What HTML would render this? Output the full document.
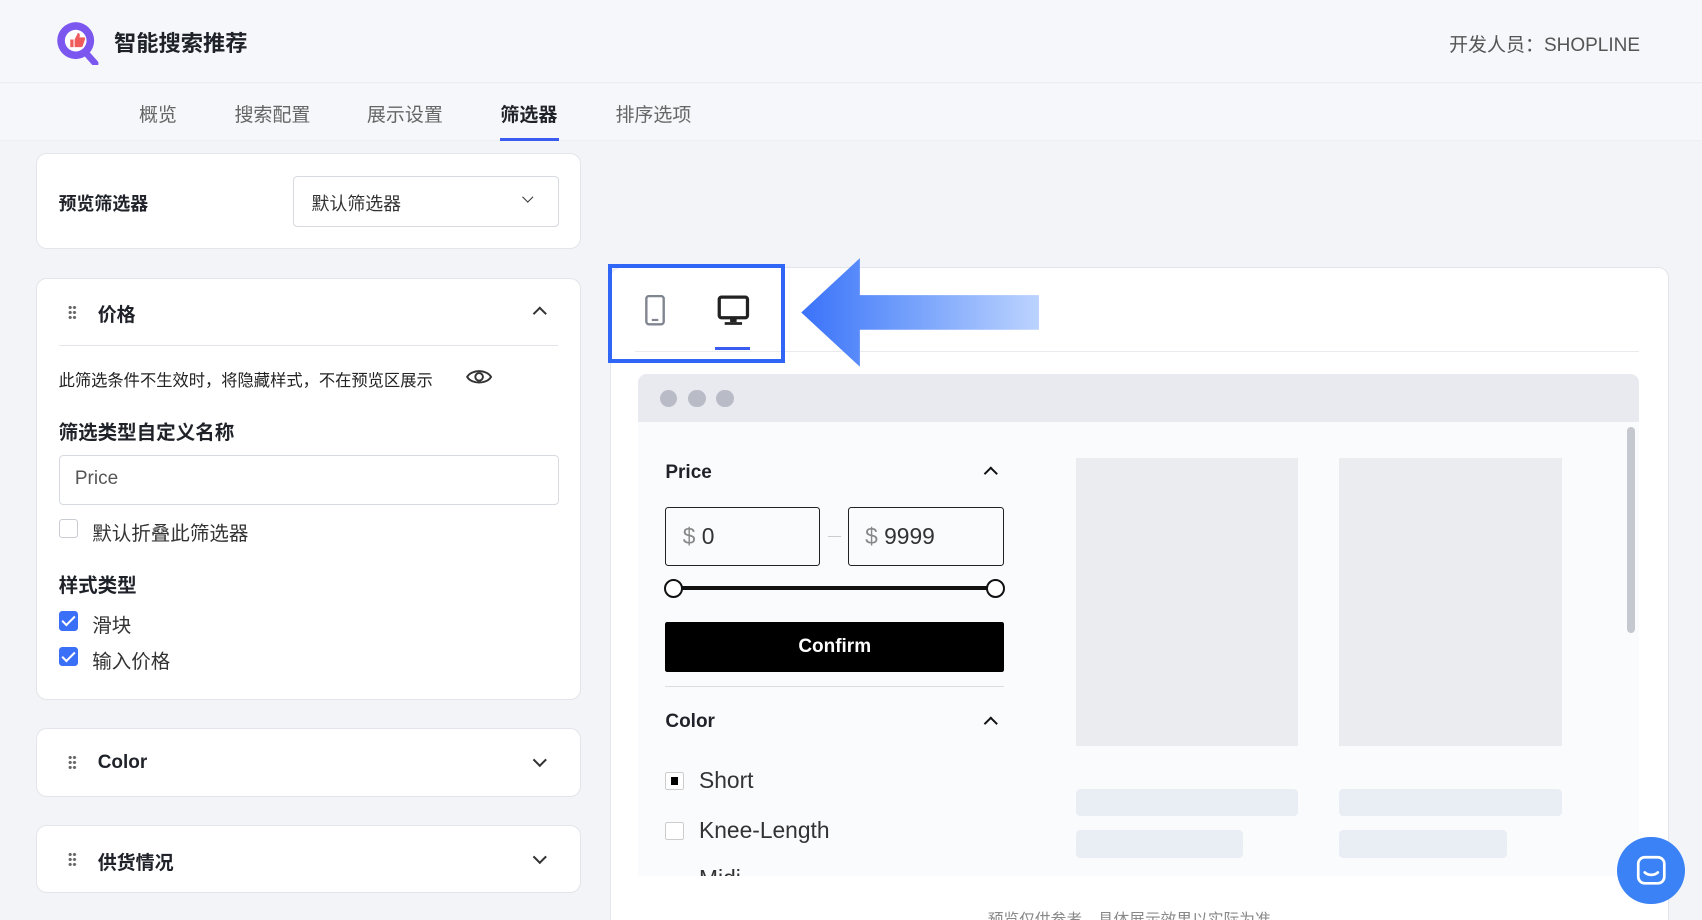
<!DOCTYPE html>
<html><head><meta charset="utf-8"><style>
html,body{margin:0;padding:0;width:1702px;height:920px;overflow:hidden;background:#f3f4f7}
#w{zoom:1.08546;width:1568px;height:848px;position:relative;font-family:"Liberation Sans","Noto Sans CJK SC",sans-serif;color:#1f2329;overflow:hidden}
.a{position:absolute}
.card{position:absolute;background:#fff;border:1px solid #e3e5ea;border-radius:10px}
.b{font-weight:bold}
.cb{position:absolute;width:18px;height:18px;border-radius:3px;background:#3a6ff7}
.cb:after{content:"";position:absolute;left:6px;top:2px;width:5px;height:10px;border:solid #fff;border-width:0 2px 2px 0;transform:rotate(45deg)}
.chev{position:absolute;width:9px;height:9px;border:solid #333;border-width:0 2px 2px 0}
.grip{position:absolute;width:8px;height:14px;background:radial-gradient(circle,#666 1.3px,transparent 1.6px) 0 0/4px 4.6px}
</style></head><body><div id="w">
<div class="a" style="left:0;top:0;width:1568px;height:76px;background:#f6f7fa;border-bottom:1px solid #eceef2"></div>
<svg class="a" style="left:50px;top:18px" width="44" height="42" viewBox="0 0 44 42"><circle cx="20" cy="19" r="17" fill="#7b57f0"/><path d="M30 31l8 9" stroke="#7b57f0" stroke-width="6" stroke-linecap="round"/><circle cx="20" cy="19" r="10" fill="#fff"/><path d="M15 18h3v7h-3zM19 18l3-6c2 0 2 2 1.5 4h4c1 0 1.5 1 1 2l-2 6c-.3.7-1 1-1.5 1H19z" fill="#f05b5b"/></svg>
<div class="a b" style="left:105px;top:24px;font-size:20.5px">智能搜索推荐</div>
<div class="a" style="left:1335px;top:28px;font-size:17.5px;color:#555">开发人员：SHOPLINE</div>
<div class="a" style="left:0;top:77px;width:1568px;height:52px;background:#f6f7fa;border-bottom:1px solid #eceef2"></div>
<div class="a" style="left:128px;top:92px;font-size:17.5px;color:#666">概览</div>
<div class="a" style="left:216px;top:92px;font-size:17.5px;color:#666">搜索配置</div>
<div class="a" style="left:338px;top:92px;font-size:17.5px;color:#666">展示设置</div>
<div class="a b" style="left:461px;top:92px;font-size:17.5px">筛选器</div>
<div class="a" style="left:461px;top:127px;width:54px;height:3px;background:#3a5cf0"></div>
<div class="a" style="left:567px;top:92px;font-size:17.5px;color:#666">排序选项</div>

<div class="card" style="left:33px;top:141px;width:500px;height:87px"></div>
<div class="a b" style="left:54px;top:175px;font-size:16.5px">预览筛选器</div>
<div class="a" style="left:270px;top:162px;width:243px;height:45px;border:1px solid #d6d9df;border-radius:4px;background:#fff"></div>
<div class="a" style="left:287px;top:175px;font-size:16.5px;color:#333">默认筛选器</div>
<div class="chev" style="left:483px;top:178px;width:6px;height:6px;border-width:0 1.5px 1.5px 0;transform:rotate(45deg)"></div>

<div class="card" style="left:33px;top:256px;width:500px;height:387px"></div>
<div class="grip" style="left:63px;top:281px"></div>
<div class="a b" style="left:90px;top:276px;font-size:17.5px">价格</div>
<div class="chev" style="left:493px;top:285px;width:7px;height:7px;transform:rotate(-135deg)"></div>
<div class="a" style="left:54px;top:318px;width:460px;height:1px;background:#e3e5ea"></div>
<div class="a" style="left:54px;top:338px;font-size:15px;color:#222">此筛选条件不生效时，将隐藏样式，不在预览区展示</div>
<svg class="a" style="left:428px;top:337px" width="26" height="20" viewBox="0 0 26 20"><path d="M2 10C6 3 20 3 24 10C20 17 6 17 2 10Z" fill="none" stroke="#333" stroke-width="1.8"/><circle cx="13" cy="10" r="3.5" fill="none" stroke="#333" stroke-width="1.8"/></svg>
<div class="a b" style="left:54px;top:383px;font-size:18px">筛选类型自定义名称</div>
<div class="a" style="left:54px;top:419px;width:459px;height:44px;border:1px solid #d6d9df;border-radius:4px"></div>
<div class="a" style="left:69px;top:431px;font-size:17.5px;color:#555">Price</div>
<div class="a" style="left:54px;top:478px;width:18px;height:18px;border:1px solid #c9ccd3;border-radius:3px;box-sizing:border-box"></div>
<div class="a" style="left:85px;top:476px;font-size:18px;color:#333">默认折叠此筛选器</div>
<div class="a b" style="left:54px;top:524px;font-size:18px">样式类型</div>
<div class="cb" style="left:54px;top:563px"></div>
<div class="a" style="left:85px;top:561px;font-size:18px;color:#333">滑块</div>
<div class="cb" style="left:54px;top:596px"></div>
<div class="a" style="left:85px;top:594px;font-size:18px;color:#333">输入价格</div>

<div class="card" style="left:33px;top:671px;width:500px;height:61px"></div>
<div class="grip" style="left:63px;top:696px"></div>
<div class="a b" style="left:90px;top:693px;font-size:17.5px">Color</div>
<div class="chev" style="left:493px;top:696px;width:7px;height:7px;transform:rotate(45deg)"></div>
<div class="card" style="left:33px;top:760px;width:500px;height:61px"></div>
<div class="grip" style="left:63px;top:785px"></div>
<div class="a b" style="left:90px;top:781px;font-size:17.5px">供货情况</div>
<div class="chev" style="left:493px;top:785px;width:7px;height:7px;transform:rotate(45deg)"></div>

<div class="card" style="left:562px;top:246px;width:974px;height:640px"></div>
<div class="a" style="left:585px;top:323px;width:925px;height:1px;background:#e8eaee"></div>
<div class="a" style="left:560px;top:243px;width:156px;height:84px;border:4px solid #2f66f5"></div>
<svg class="a" style="left:591px;top:272px" width="24" height="30" viewBox="0 0 24 30"><rect x="4" y="1" width="16" height="26" rx="2.5" fill="none" stroke="#808590" stroke-width="2.2"/><rect x="9" y="22" width="6" height="2" fill="#808590"/></svg>
<svg class="a" style="left:660px;top:272px" width="32" height="30" viewBox="0 0 32 30"><rect x="3" y="2" width="26" height="19" rx="2" fill="none" stroke="#222" stroke-width="3"/><rect x="13" y="21" width="6" height="4" fill="#222"/><rect x="8" y="25" width="16" height="2.5" fill="#222"/></svg>
<div class="a" style="left:659px;top:320px;width:32px;height:2px;background:#3a5cf0"></div>
<svg class="a" style="left:735px;top:236px" width="225" height="104" viewBox="0 0 225 104"><defs><linearGradient id="g" x1="0" x2="1"><stop offset="0" stop-color="#3a72fa"/><stop offset=".4" stop-color="#6d9bfb"/><stop offset="1" stop-color="#bcd3fe"/></linearGradient></defs><path d="M3 52L57 2V36H222V68H57V102Z" fill="url(#g)"/></svg>

<div class="a" style="left:588px;top:345px;width:922px;height:44px;background:#e8eaef;border-radius:8px 8px 0 0"></div>
<div class="a" style="left:608px;top:359px;width:16px;height:16px;border-radius:50%;background:#b9bcc6"></div>
<div class="a" style="left:634px;top:359px;width:16px;height:16px;border-radius:50%;background:#b9bcc6"></div>
<div class="a" style="left:660px;top:359px;width:16px;height:16px;border-radius:50%;background:#b9bcc6"></div>
<div class="a" style="left:588px;top:389px;width:922px;height:418px;background:#fafbfd"></div>
<div class="a" style="left:1499px;top:393px;width:7px;height:190px;border-radius:4px;background:#c5c8cf"></div>
<div class="a b" style="left:613px;top:426px;font-size:17.5px">Price</div>
<div class="chev" style="left:908px;top:432px;width:7px;height:7px;transform:rotate(-135deg);border-color:#111"></div>
<div class="a" style="left:613px;top:467px;width:141px;height:53px;border:1.5px solid #222;border-radius:3px"></div>
<div class="a" style="left:629px;top:482px;font-size:21px;color:#333"><span style="color:#888">$</span> 0</div>
<div class="a" style="left:763px;top:494px;width:12px;height:1px;background:#ccc"></div>
<div class="a" style="left:781px;top:467px;width:142px;height:53px;border:1.5px solid #222;border-radius:3px"></div>
<div class="a" style="left:797px;top:482px;font-size:21px;color:#333"><span style="color:#888">$</span> 9999</div>
<div class="a" style="left:620px;top:540px;width:298px;height:4px;background:#111"></div>
<div class="a" style="left:612px;top:533px;width:14px;height:14px;border:2px solid #111;border-radius:50%;background:#fff"></div>
<div class="a" style="left:908px;top:533px;width:14px;height:14px;border:2px solid #111;border-radius:50%;background:#fff"></div>
<div class="a b" style="left:613px;top:573px;width:312px;height:46px;background:#000;color:#fff;font-size:17.5px;text-align:center;line-height:46px;border-radius:2px">Confirm</div>
<div class="a" style="left:613px;top:632px;width:312px;height:1px;background:#ddd"></div>
<div class="a b" style="left:613px;top:655px;font-size:17.5px">Color</div>
<div class="chev" style="left:908px;top:662px;width:7px;height:7px;transform:rotate(-135deg);border-color:#111"></div>
<div class="a" style="left:613px;top:711px;width:17px;height:17px;border:1px solid #ccc;border-radius:2px;box-sizing:border-box;background:#fff"><div style="margin:4px;width:7px;height:7px;background:#000"></div></div>
<div class="a" style="left:644px;top:707px;font-size:21px;color:#333">Short</div>
<div class="a" style="left:613px;top:757px;width:17px;height:17px;border:1px solid #ccc;border-radius:2px;box-sizing:border-box;background:#fff"></div>
<div class="a" style="left:644px;top:753px;font-size:21px;color:#333">Knee-Length</div>
<div class="a" style="left:644px;top:797px;font-size:21px;color:#333;height:10px;overflow:hidden">Midi</div>
<div class="a" style="left:991px;top:422px;width:205px;height:265px;background:#eaecf0"></div>
<div class="a" style="left:1234px;top:422px;width:205px;height:265px;background:#eaecf0"></div>
<div class="a" style="left:991px;top:727px;width:205px;height:25px;border-radius:4px;background:#e9eef5"></div>
<div class="a" style="left:1234px;top:727px;width:205px;height:25px;border-radius:4px;background:#e9eef5"></div>
<div class="a" style="left:991px;top:765px;width:154px;height:25px;border-radius:4px;background:#e9eef5"></div>
<div class="a" style="left:1234px;top:765px;width:154px;height:25px;border-radius:4px;background:#e9eef5"></div>
<div class="a" style="left:910px;top:836px;font-size:14.5px;color:#888">预览仅供参考，具体展示效果以实际为准</div>
<div class="a" style="left:1490px;top:771px;width:62px;height:62px;border-radius:50%;background:#3b82f6"></div>
<svg class="a" style="left:1506px;top:787px" width="30" height="30" viewBox="0 0 30 30"><rect x="3" y="3" width="24" height="24" rx="6" fill="none" stroke="#fff" stroke-width="2.5"/><path d="M9 17c3 3 9 3 12 0" fill="none" stroke="#fff" stroke-width="2.5" stroke-linecap="round"/></svg>
</div></body></html>
